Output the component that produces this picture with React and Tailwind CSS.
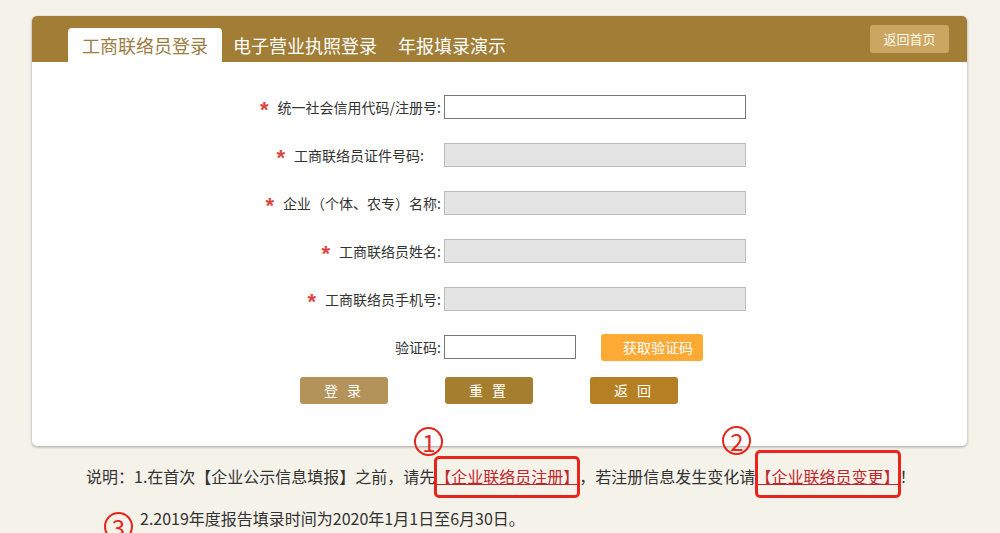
const fields = [
  { label: "统一社会信用代码/注册号:", pr: "pr-[3px]", white: true },
  { label: "工商联络员证件号码:", pr: "pr-[20px]" },
  { label: "企业（个体、农专）名称:", pr: "pr-[3px]" },
  { label: "工商联络员姓名:", pr: "pr-[3px]" },
  { label: "工商联络员手机号:", pr: "pr-[3px]" },
];

function Circled({ n, className }) {
  return (
    <span
      className={`absolute flex h-[29px] w-[29px] items-center justify-center rounded-full border-2 border-[#e3261e] text-[24px] leading-none text-[#e3261e] ${className}`}
    >
      {n}
    </span>
  );
}

export default function App() {
  return (
    <div className="min-h-[533px] bg-[#f5f2ea] pt-[16px] font-['Microsoft_YaHei','Noto_Sans_CJK_SC',sans-serif] text-[#333] [text-spacing-trim:space-all]">
      {/* Card */}
      <div className="ml-[32px] w-[935px] rounded-[5px] bg-white shadow-[0_1px_3px_rgba(0,0,0,0.35)]">
        {/* Header */}
        <div className="flex h-[46px] items-end rounded-t-[5px] bg-[#a17d36] pl-[36px]">
          <div className="flex h-[34px] w-[154px] items-center justify-center rounded-t-[4px] bg-white text-[18px] text-[#9c7c45]">
            工商联络员登录
          </div>
          <div className="ml-[11px] flex h-[34px] items-center text-[18px] text-white">
            电子营业执照登录
          </div>
          <div className="ml-[21px] flex h-[34px] items-center text-[18px] text-white">
            年报填录演示
          </div>
          <button className="mr-[18px] mb-[9px] ml-auto h-[28px] w-[79px] self-end rounded-[3px] bg-[#cba660] text-[13px] text-[#fff8ea]">
            返回首页
          </button>
        </div>

        {/* Form */}
        <div className="flex flex-col gap-[24px] pt-[33px]">
          {fields.map((f) => (
            <div key={f.label} className="flex h-[24px] items-center">
              <div className={`flex w-[412px] items-center justify-end text-[14px] ${f.pr}`}>
                <span className="mt-[6px] mr-[9px] font-['Liberation_Sans',sans-serif] text-[22px] leading-none font-bold text-[#d9463e]">
                  *
                </span>
                <span>{f.label}</span>
              </div>
              <input
                className={`h-[24px] w-[302px] border ${
                  f.white ? "border-[#777] bg-white" : "border-[#bbb] bg-[#e4e4e4]"
                }`}
              />
            </div>
          ))}
          <div className="flex h-[24px] items-center">
            <div className="w-[412px] pr-[3px] text-right text-[14px]">验证码:</div>
            <input className="h-[24px] w-[132px] border border-[#777] bg-white" />
            <button className="ml-[25px] h-[27px] w-[102px] rounded-[3px] bg-[#fdaa35] pl-[12px] text-[14px] text-white">
              获取验证码
            </button>
          </div>
        </div>

        {/* Buttons */}
        <div className="flex gap-[57px] pt-[18px] pb-[42px] pl-[268px]">
          <button className="h-[27px] w-[88px] rounded-[3px] bg-[#b4935a] text-[14px] tracking-[3px] text-white">
            登 录
          </button>
          <button className="h-[27px] w-[88px] rounded-[3px] bg-[#a67e30] text-[14px] tracking-[3px] text-white">
            重 置
          </button>
          <button className="h-[27px] w-[88px] rounded-[3px] bg-[#b58023] text-[14px] tracking-[3px] text-white">
            返 回
          </button>
        </div>
      </div>

      {/* Notes */}
      <div className="pt-[19px] text-[16px] leading-[22px]">
        <p className="pl-[86px]">
          说明：1.在首次【企业公示信息填报】之前，请先
          <span className="relative text-[#c0272d]">
            <span className="underline">【企业联络员注册】</span>
            <span className="absolute -top-[8px] -right-[1px] -bottom-[10px] -left-[1px] rounded-[5px] border-[3px] border-[#e8241c]" />
            <Circled n="1" className="-top-[37px] -left-[21px]" />
          </span>
          ，若注册信息发生变化请
          <span className="relative text-[#c0272d]">
            <span className="underline">【企业联络员变更】</span>
            <span className="absolute -top-[14px] -right-[2px] -bottom-[10px] left-0 rounded-[5px] border-[3px] border-[#e8241c]" />
            <Circled n="2" className="-top-[38px] -left-[33px]" />
          </span>
          ！
        </p>
        <p className="relative mt-[20px] pl-[140px]">
          <span className="relative">
            <Circled n="3" className="top-[6px] -left-[36px]" />
            2.2019年度报告填录时间为2020年1月1日至6月30日。
          </span>
        </p>
      </div>
    </div>
  );
}
